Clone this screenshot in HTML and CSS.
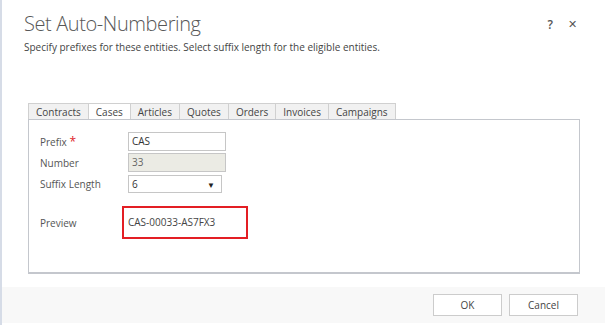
FILE: index.html
```html
<!DOCTYPE html>
<html lang="en">

<head>
  <meta charset="UTF-8">
  <meta name="viewport" content="width=device-width, initial-scale=1.0">
  <title>Set Auto-Numbering</title>
  <link rel="stylesheet" href="styles.css">
</head>

<body>
  <div class="dialog">
    <div class="head">
      <h1>Set Auto-Numbering</h1>
      <div class="head-actions">
        <span class="help">?</span>
        <span class="close">&#x2715;</span>
      </div>
    </div>
    <p class="subtitle">Specify prefixes for these entities. Select suffix length for the eligible entities.</p>

    <div class="tabs">
      <div class="tab">Contracts</div>
      <div class="tab active">Cases</div>
      <div class="tab">Articles</div>
      <div class="tab">Quotes</div>
      <div class="tab">Orders</div>
      <div class="tab">Invoices</div>
      <div class="tab">Campaigns</div>
    </div>

    <div class="panel">
      <div class="row">
        <label class="label">Prefix <span class="req">*</span></label>
        <div class="field">CAS</div>
      </div>
      <div class="row">
        <label class="label">Number</label>
        <div class="field disabled">33</div>
      </div>
      <div class="row">
        <label class="label">Suffix Length</label>
        <div class="field select">6<span class="arrow">&#9660;</span></div>
      </div>
      <div class="row preview-row">
        <label class="label">Preview</label>
        <div class="preview">CAS-00033-AS7FX3</div>
      </div>
    </div>

    <div class="foot">
      <button class="btn">OK</button>
      <button class="btn">Cancel</button>
    </div>
  </div>
</body>

</html>
```

FILE: styles.css
```css
body {
  font-family: 'Open Sans', 'Noto Sans', sans-serif;
  margin: 0;
  background-color: #fff;
  color: #444;
}

.dialog {
  width: 603px;
  height: 325px;
  border-left: 2px solid #d6dce7;
  display: flex;
  flex-direction: column;
}

.head {
  display: flex;
  justify-content: space-between;
  align-items: flex-start;
  padding: 10px 28px 0 22px;
}

h1 {
  margin: 0;
  font-size: 20px;
  font-weight: 300;
  letter-spacing: -0.4px;
  line-height: 28px;
  color: #575757;
}

.head-actions {
  display: flex;
  gap: 15px;
  padding-top: 6px;
  font-size: 12px;
  color: #555;
}

.help {
  font-weight: 600;
}

.close {
  font-size: 11px;
}

.subtitle {
  margin: 1px 0 0 22px;
  font-size: 10px;
  line-height: 16px;
  color: #444;
}

.tabs {
  display: flex;
  margin: 48px 0 0 26px;
  height: 16px;
}

.tab {
  font-size: 10px;
  line-height: 16px;
  padding: 0 7px;
  background-color: #f1f1f1;
  border: 1px solid #d0d0d0;
  border-bottom: none;
  border-left: none;
  color: #444;
}

.tab:first-child {
  border-left: 1px solid #d0d0d0;
}

.tab.active {
  background-color: #fff;
}

.panel {
  margin: 0 25px 0 26px;
  height: 155px;
  border: 1px solid #c4c7cd;
  border-bottom-width: 2px;
  padding: 12px 0 0 11px;
  box-sizing: border-box;
}

.row {
  display: flex;
  align-items: center;
  margin-bottom: 2px;
}

.label {
  width: 88px;
  font-size: 10px;
  color: #555;
}

.req {
  color: #e0232b;
  font-size: 12px;
}

.field {
  width: 98px;
  height: 19px;
  box-sizing: border-box;
  border: 1px solid #c6c6c6;
  font-size: 10px;
  line-height: 17px;
  padding: 0 3px;
  color: #333;
}

.field.disabled {
  background-color: #ebebe4;
  color: #666;
}

.field.select {
  width: 94px;
  height: 18px;
  margin-top: 1px;
  display: flex;
  justify-content: space-between;
}

.arrow {
  font-size: 8px;
  color: #222;
  padding-right: 3px;
}

.preview-row {
  margin-top: 13px;
}

.preview-row .label {
  width: 82px;
}

.preview {
  width: 126px;
  height: 33px;
  box-sizing: border-box;
  border: 2px solid #e31e24;
  font-size: 10px;
  line-height: 29px;
  padding-left: 4px;
  color: #444;
}

.foot {
  margin-top: 13px;
  height: 36px;
  flex-shrink: 0;
  background-color: #f8f8f8;
  display: flex;
  justify-content: flex-end;
  align-items: center;
  gap: 7px;
  padding-right: 27px;
}

.btn {
  width: 69px;
  height: 22px;
  background-color: #fff;
  border: 1px solid #ccc;
  font-family: inherit;
  font-size: 10px;
  color: #444;
  padding: 0;
}
```
